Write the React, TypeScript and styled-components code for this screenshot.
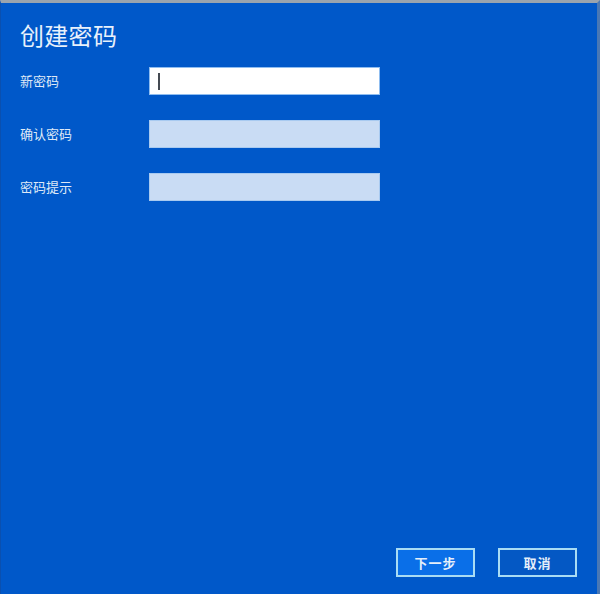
import styled, { createGlobalStyle } from 'styled-components';

const GlobalStyle = createGlobalStyle`
  html, body {
    margin: 0;
    padding: 0;
    background: #0058c9;
  }
  body {
    font-family: "Noto Sans CJK SC", "Noto Sans", sans-serif;
  }
`;

const fields = [
  { id: 'new', label: '新密码', active: true },
  { id: 'confirm', label: '确认密码', active: false },
  { id: 'hint', label: '密码提示', active: false },
];

export default function App() {
  return (
    <>
      <GlobalStyle />
      <Window>
        <Title>创建密码</Title>
        <Form>
          {fields.map((field) => (
            <Row key={`field-${field.id}`}>
              <Label>{field.label}</Label>
              <Input active={field.active}>
                {field.active && <Caret />}
              </Input>
            </Row>
          ))}
        </Form>
        <Footer>
          <Button primary>下一步</Button>
          <Button>取消</Button>
        </Footer>
      </Window>
    </>
  );
}

const Window = styled('div')`
  height: 594px;
  box-sizing: border-box;
  display: flex;
  flex-direction: column;
  background: #0058c9;
  border-top: 3px solid #9aa4ae;
  border-right: 3px solid #4a78b4;
  border-left: 1px solid #0a50b0;
  padding: 16px 20px 17px 19px;
  color: #e8f1fb;
`;

const Title = styled('div')`
  font-size: 24px;
  line-height: 31px;
  letter-spacing: 0.3px;
  margin-bottom: 17px;
`;

const Form = styled('div')`
  display: flex;
  flex-direction: column;
  gap: 25px;
`;

const Row = styled('div')`
  display: flex;
  align-items: center;
`;

const Label = styled('div')`
  width: 129px;
  font-size: 13px;
  line-height: 18px;
  color: #dfe9f7;
`;

const Input = styled('div')<{ active?: boolean }>`
  width: 231px;
  height: 28px;
  box-sizing: border-box;
  border: 1px solid ${(props) => (props.active ? '#8fbdf0' : '#a8caf0')};
  background: ${(props) => (props.active ? '#ffffff' : '#c9dcf4')};
  display: flex;
  align-items: center;
  padding-left: 8px;
`;

const Caret = styled('div')`
  width: 2px;
  height: 17px;
  background: #444a52;
`;

const Footer = styled('div')`
  margin-top: auto;
  display: flex;
  justify-content: flex-end;
  gap: 23px;
`;

const Button = styled('div')<{ primary?: boolean }>`
  width: 79px;
  height: 29px;
  box-sizing: border-box;
  display: flex;
  align-items: center;
  justify-content: center;
  border: 2px solid #a9dcf4;
  background: ${(props) => (props.primary ? '#0a6fe8' : '#0458c4')};
  color: #e4eefa;
  font-size: 13px;
  font-weight: bold;
  letter-spacing: 1px;
`;
